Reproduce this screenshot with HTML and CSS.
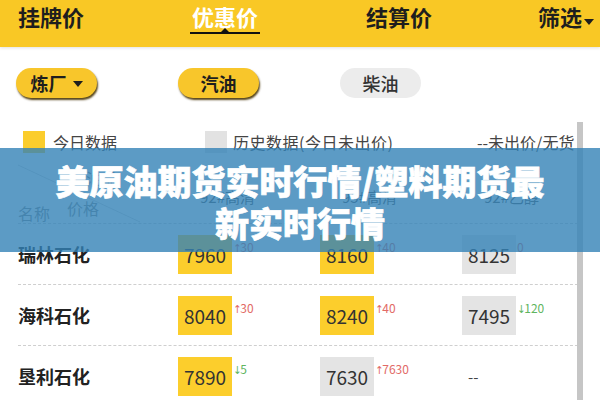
FILE: index.html
```html
<!DOCTYPE html>
<html lang="zh-CN">
<head>
<meta charset="utf-8">
<title>优惠价</title>
<link rel="stylesheet" href="styles.css">
</head>
<body>
<div class="screen">
  <nav class="tabs">
    <div class="tab">挂牌价</div>
    <div class="tab active"><span>优惠价</span><i class="bar"></i></div>
    <div class="tab">结算价</div>
    <div class="tab filter">筛选<span class="caret"></span></div>
  </nav>

  <div class="filters">
    <div class="pill on">炼厂<span class="caret"></span></div>
    <div class="pill on">汽油</div>
    <div class="pill">柴油</div>
  </div>

  <div class="legend">
    <div class="key key-today"><span class="swatch yellow"></span>今日数据</div>
    <div class="key key-hist"><span class="swatch gray"></span>历史数据(今日未出价)</div>
    <div class="key">--未出价/无货</div>
  </div>

  <div class="table">
    <div class="thead">
      <div class="corner">
        <svg class="slash" width="160" height="70" viewBox="0 0 160 70"><line x1="0" y1="12" x2="122" y2="69" stroke="#d8d8d8" stroke-width="1"/></svg>
        <span class="h-top">油品</span>
        <span class="h-name">名称</span>
        <span class="h-price">价格</span>
      </div>
      <div class="th">92#高清</div>
      <div class="th">95#高清</div>
      <div class="th">92#乙醇</div>
    </div>

    <div class="tr">
      <div class="name">瑞林石化</div>
      <div class="cell"><span class="price today">7960</span><span class="chg up"><b>↑</b>30</span></div>
      <div class="cell"><span class="price today">8160</span><span class="chg up"><b>↑</b>40</span></div>
      <div class="cell"><span class="price hist">8125</span><span class="chg up">0</span></div>
    </div>
    <div class="tr">
      <div class="name">海科石化</div>
      <div class="cell"><span class="price today">8040</span><span class="chg up"><b>↑</b>30</span></div>
      <div class="cell"><span class="price today">8240</span><span class="chg up"><b>↑</b>40</span></div>
      <div class="cell"><span class="price hist">7495</span><span class="chg down"><b>↓</b>120</span></div>
    </div>
    <div class="tr">
      <div class="name">垦利石化</div>
      <div class="cell"><span class="price today">7890</span><span class="chg down"><b>↓</b>5</span></div>
      <div class="cell"><span class="price hist">7630</span><span class="chg up"><b>↑</b>7630</span></div>
      <div class="cell"><span class="none">--</span></div>
    </div>
  </div>

  <div class="scrollbar"></div>
  <div class="banner">美原油期货实时行情/塑料期货最新实时行情</div>
</div>
</body>
</html>
```

FILE: styles.css
```css
* { box-sizing: border-box; }

html, body {
  margin: 0;
  padding: 0;
  background: #fff;
}

body {
  font-family: "Noto Sans CJK SC", "Noto Sans", sans-serif;
  color: #222;
}

.screen {
  position: relative;
  width: 600px;
  height: 400px;
  overflow: hidden;
  background: #fff;
}

/* top tab bar */
.tabs {
  display: flex;
  align-items: flex-start;
  gap: 106px;
  height: 47px;
  padding-left: 18px;
  background: #f9c825;
  box-shadow: 0 1px 3px rgba(0, 0, 0, 0.12);
}

.tab {
  display: flex;
  flex-direction: column;
  align-items: center;
  padding-top: 3px;
  font-size: 22px;
  line-height: 26px;
  font-weight: 700;
  color: #1e1e1e;
  white-space: nowrap;
}

.tab.active { color: #fff; }

.tab .bar {
  position: relative;
  display: block;
  width: 70px;
  height: 2px;
  margin-top: 3px;
  background: #111;
}

.tab .bar::after {
  content: "";
  position: absolute;
  left: 31px;
  top: -4px;
  border-left: 4px solid transparent;
  border-right: 4px solid transparent;
  border-bottom: 4px solid #111;
}

.tab.filter {
  flex-direction: row;
  gap: 2px;
}

.caret {
  display: inline-block;
  width: 0;
  height: 0;
  border-left: 5px solid transparent;
  border-right: 5px solid transparent;
  border-top: 6px solid #1e1e1e;
}

.tab.filter .caret { margin-top: 11px; }

/* filter pills */
.filters {
  display: flex;
  gap: 81px;
  margin-top: 21px;
  padding-left: 16px;
}

.pill {
  display: flex;
  align-items: center;
  justify-content: center;
  gap: 6px;
  width: 81px;
  height: 30px;
  border-radius: 15px;
  background: #ececec;
  font-size: 18px;
  font-weight: 500;
  color: #333;
}

.pill.on {
  background: #f8c62b;
  color: #1e1e1e;
  font-weight: 700;
  box-shadow: 1px 2px 2px rgba(70, 50, 0, 0.9);
}

.pill .caret { margin-top: 2px; }

/* legend */
.legend {
  display: flex;
  align-items: center;
  height: 22px;
  margin-top: 33px;
  padding-left: 23px;
  font-size: 16px;
  color: #444;
}

.key {
  display: flex;
  align-items: center;
  gap: 8px;
  white-space: nowrap;
}

.key-today { width: 182px; }
.key-hist { width: 272px; gap: 6px; letter-spacing: 0.5px; }

.swatch {
  width: 22px;
  height: 22px;
}

.swatch.yellow { background: #fbcd2c; }
.swatch.gray { background: #e2e2e2; }

/* price table */
.table {
  margin: 0 17px 0 18px;
}

.thead,
.tr {
  display: grid;
  grid-template-columns: 160px 142px 142px 1fr;
  border-bottom: 1px dashed #cfcfcf;
}

.thead { height: 71px; }

.corner {
  position: relative;
}

.slash {
  position: absolute;
  left: 0;
  top: 0;
}

.corner span {
  position: absolute;
  color: #8a8a8a;
  font-size: 16px;
  line-height: 18px;
}

.h-top { left: 68px; top: 16px; }
.h-name { left: 0; top: 51px; }
.h-price { left: 49px; top: 46px; }

.th {
  padding: 35px 0 0 22px;
  font-size: 15px;
  line-height: 18px;
  color: #555;
}

.tr {
  height: 61px;
  align-items: center;
}

.name {
  font-size: 18px;
  font-weight: 700;
  color: #222;
}

.cell {
  display: flex;
  align-items: flex-start;
}

.price {
  display: flex;
  align-items: center;
  justify-content: center;
  width: 54px;
  height: 39px;
  font-size: 19px;
  color: #333;
}

.price.today { background: #fcce2c; }
.price.hist { background: #e4e4e4; }

.chg {
  margin: 5px 0 0 1px;
  font-size: 12px;
  line-height: 14px;
  white-space: nowrap;
}

/* thin arrow glyph sits tight against the number */
.chg b {
  font-family: "DejaVu Sans Condensed", "DejaVu Sans", sans-serif;
  font-weight: 400;
  font-size: 11px;
  margin-right: -1px;
}

.chg.up { color: #e26a66; }
.chg.down { color: #5fb55f; }

.none {
  padding-left: 6px;
  font-size: 15px;
  line-height: 39px;
  color: #444;
}

/* overlays */
.scrollbar {
  position: absolute;
  left: 577px;
  top: 122px;
  width: 6px;
  bottom: 0;
  background: #c6c6c6;
}

.banner {
  position: absolute;
  left: 0;
  right: 0;
  top: 148px;
  height: 104px;
  padding: 12px 45px 0;
  background: rgba(51, 130, 182, 0.8);
  color: #fff;
  font-size: 34px;
  line-height: 42px;
  font-weight: 900;
  text-align: center;
  -webkit-text-stroke: 0.7px #fff;
}
```
